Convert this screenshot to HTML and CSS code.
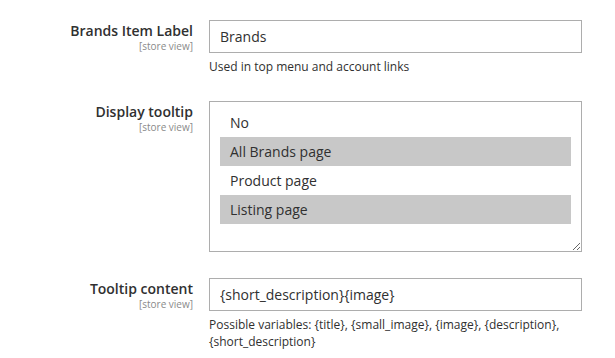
FILE: index.html
```html
<!DOCTYPE html>
<html lang="en">
<head>
  <meta charset="UTF-8">
  <meta name="viewport" content="width=device-width, initial-scale=1">
  <title>Brands Configuration</title>
  <link rel="stylesheet" href="styles.css">
</head>
<body>
  <!-- Config fields -->
  <div class="fieldset">
    <div class="field">
      <label class="field-label" for="item-label">
        <span class="label-text">Brands Item Label</span>
        <span class="scope">[store view]</span>
      </label>
      <div class="field-control">
        <input id="item-label" class="input-text" type="text" value="Brands">
        <div class="note">Used in top menu and account links</div>
      </div>
    </div>

    <div class="field">
      <label class="field-label" for="display-tooltip">
        <span class="label-text">Display tooltip</span>
        <span class="scope">[store view]</span>
      </label>
      <div class="field-control">
        <select id="display-tooltip" class="multiselect" multiple>
          <option>No</option>
          <option selected>All Brands page</option>
          <option>Product page</option>
          <option selected>Listing page</option>
        </select>
      </div>
    </div>

    <div class="field">
      <label class="field-label" for="tooltip-content">
        <span class="label-text">Tooltip content</span>
        <span class="scope">[store view]</span>
      </label>
      <div class="field-control">
        <input id="tooltip-content" class="input-text" type="text" value="{short_description}{image}">
        <div class="note">Possible variables: {title}, {small_image}, {image}, {description}, {short_description}</div>
      </div>
    </div>
  </div>
</body>
</html>
```

FILE: styles.css
```css
/* Reset dasar */
* {
  margin: 0;
  padding: 0;
  box-sizing: border-box;
}
body {
  font-family: 'Open Sans', sans-serif;
  background: #fff;
  color: #303030;
  font-size: 14px;
}
/* Fieldset */
.fieldset {
  padding-top: 20px;
}
.field {
  display: grid;
  grid-template-columns: 193px 373px;
  column-gap: 16px;
  margin-bottom: 26px;
}
.field:last-child {
  margin-bottom: 0;
}
/* Label kiri */
.field-label {
  display: flex;
  flex-direction: column;
  align-items: flex-end;
  text-align: right;
  padding-top: 2px;
}
.label-text {
  font-weight: 600;
  font-size: 14px;
  line-height: 18px;
  color: #303030;
}
.scope {
  font-size: 10px;
  line-height: 13px;
  color: #8a8a8a;
}
/* Input teks */
.input-text {
  display: block;
  width: 100%;
  height: 33px;
  border: 1px solid #adadad;
  border-radius: 0;
  padding: 0 10px;
  font-family: 'Open Sans', sans-serif;
  font-size: 14px;
  color: #303030;
  background: #fff;
  outline: none;
}
/* Multiselect */
.multiselect {
  display: block;
  width: 100%;
  height: 151px;
  border: 1px solid #adadad;
  border-radius: 0;
  padding: 6px 10px;
  font-family: 'Open Sans', sans-serif;
  font-size: 14px;
  color: #303030;
  background: #fff;
  overflow: auto;
  resize: vertical;
  outline: none;
}
.multiselect option {
  padding: 5px 10px;
  line-height: 19px;
  color: #303030;
}
.multiselect option:checked {
  background: linear-gradient(#c8c8c8, #c8c8c8);
  color: #303030;
}
/* Catatan bantuan */
.note {
  margin-top: 5px;
  font-size: 12px;
  line-height: 17px;
  color: #303030;
}
```
